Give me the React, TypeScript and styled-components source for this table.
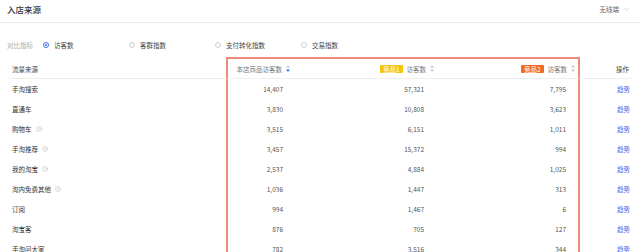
import styled, { createGlobalStyle } from 'styled-components';
import { ChevronDown, CircleHelp } from 'lucide-react';

const GlobalStyle = createGlobalStyle`
  body {
    margin: 0;
    background: #fff;
    font-family: "Noto Sans CJK SC", "Noto Sans", sans-serif;
    color: #333;
  }
`;

interface Row {
  name: string;
  help?: boolean;
  own: string;
  rival1: string;
  rival2: string;
}

const rows: Row[] = [
  { name: '手淘搜索', own: '14,407', rival1: '57,321', rival2: '7,795' },
  { name: '直通车', own: '3,830', rival1: '10,808', rival2: '3,623' },
  { name: '购物车', help: true, own: '3,515', rival1: '6,151', rival2: '1,011' },
  { name: '手淘推荐', help: true, own: '3,457', rival1: '15,372', rival2: '994' },
  { name: '我的淘宝', help: true, own: '2,537', rival1: '4,884', rival2: '1,025' },
  { name: '淘内免费其他', help: true, own: '1,036', rival1: '1,447', rival2: '313' },
  { name: '订阅', own: '994', rival1: '1,467', rival2: '6' },
  { name: '淘宝客', own: '876', rival1: '705', rival2: '127' },
  { name: '手淘问大家', own: '782', rival1: '3,516', rival2: '344' },
];

const options = ['访客数', '客群指数', '支付转化指数', '交易指数'];

const SortIcon = ({ active }: { active?: boolean }) => (
  <svg width="4" height="7" viewBox="0 0 4 7">
    <path d="M2 0 L4 2.6 L0 2.6 Z" fill="#c4c8d0" />
    <path d="M2 7 L4 4.4 L0 4.4 Z" fill={active ? '#3b6ef0' : '#c4c8d0'} />
  </svg>
);

const App = () => {
  return (
    <Page>
      <GlobalStyle />
      <Header>
        <Title>入店来源</Title>
        <Device>
          无线端
          <ChevronDown size={7} color="#999" strokeWidth={1.5} />
        </Device>
      </Header>
      <Filter>
        <FilterLabel>对比指标</FilterLabel>
        {options.map((o, i) => (
          <Option key={o}>
            <Radio $checked={i === 0} />
            {o}
          </Option>
        ))}
      </Filter>
      <Table>
        <HeadCell $dark>流量来源</HeadCell>
        <HeadCell $num $left $top>
          本店商品访客数
          <SortIcon active />
        </HeadCell>
        <HeadCell $num $top>
          <Badge $color="#f4c40f">竞品1</Badge>
          访客数
          <SortIcon />
        </HeadCell>
        <HeadCell $num $right $top>
          <Badge $color="#f06c22">竞品2</Badge>
          访客数
          <SortIcon />
        </HeadCell>
        <HeadCell $num $dark>操作</HeadCell>
        {rows.map((r) => (
          <Line key={r.name}>
            <NameCell>
              {r.name}
              {r.help && <CircleHelp size={6} color="#aaa" strokeWidth={1.6} />}
            </NameCell>
            <NumCell $left $pad={10}>{r.own}</NumCell>
            <NumCell $pad={13}>{r.rival1}</NumCell>
            <NumCell $right $pad={12}>{r.rival2}</NumCell>
            <ActionCell>趋势</ActionCell>
          </Line>
        ))}
      </Table>
    </Page>
  );
};

export default App;

const Page = styled.div`
  width: 640px;
  height: 252px;
  overflow: hidden;
  font-size: 6.5px;
`;

const Header = styled.div`
  box-sizing: border-box;
  height: 23px;
  padding: 0 8px 4px 7px;
  display: flex;
  align-items: center;
  justify-content: space-between;
  border-bottom: 1px solid #ececec;
`;

const Title = styled.h3`
  margin: 0;
  font-size: 8.5px;
  font-weight: 500;
  color: #333;
`;

const Device = styled.div`
  display: flex;
  align-items: center;
  gap: 4px;
  color: #666;
  font-size: 6.5px;
  padding-right: 2px;
`;

const Filter = styled.div`
  height: 12px;
  margin-top: 16px;
  padding-left: 7px;
  display: flex;
  align-items: center;
`;

const FilterLabel = styled.span`
  color: #aaa;
  width: 36px;
`;

const Option = styled.label`
  width: 86px;
  display: flex;
  align-items: center;
  gap: 5px;
  color: #444;
`;

const Radio = styled.span<{ $checked?: boolean }>`
  box-sizing: border-box;
  width: 6px;
  height: 6px;
  border-radius: 50%;
  border: 1px solid ${({ $checked }) => ($checked ? '#3b6ef0' : '#cfcfcf')};
  display: flex;
  align-items: center;
  justify-content: center;
  &::after {
    content: '';
    width: 2px;
    height: 2px;
    border-radius: 50%;
    background: ${({ $checked }) => ($checked ? '#3b6ef0' : 'transparent')};
  }
`;

const Table = styled.div`
  margin: 6px 8px 0 8px;
  display: grid;
  grid-template-columns: 218px 67px 144px 143px 52px;
  grid-auto-rows: 20px;
  grid-template-rows: 22px;
`;

interface CellProps {
  $num?: boolean;
  $left?: boolean;
  $right?: boolean;
  $top?: boolean;
  $dark?: boolean;
  $pad?: number;
}

const HeadCell = styled.div<CellProps>`
  box-sizing: border-box;
  display: flex;
  align-items: center;
  justify-content: ${({ $num }) => ($num ? 'flex-end' : 'flex-start')};
  gap: 4px;
  padding: 0 3px 0 4px;
  color: ${({ $dark }) => ($dark ? '#444' : '#777')};
  border-bottom: 1px solid #eeeeee;
  border-top: 2px solid ${({ $top }) => ($top ? '#ec8a7c' : 'transparent')};
  ${({ $left }) => $left && 'border-left: 2px solid #ec8a7c;'}
  ${({ $right }) => $right && 'border-right: 2px solid #ec8a7c;'}
`;

const Line = styled.div`
  display: contents;
`;

const NameCell = styled.div`
  display: flex;
  align-items: center;
  gap: 4px;
  padding-left: 4px;
  color: #333;
`;

const NumCell = styled.div<CellProps>`
  box-sizing: border-box;
  display: flex;
  align-items: center;
  justify-content: flex-end;
  padding-right: ${({ $pad }) => $pad ?? 12}px;
  color: #555;
  ${({ $left }) => $left && 'border-left: 2px solid #ec8a7c;'}
  ${({ $right }) => $right && 'border-right: 2px solid #ec8a7c;'}
`;

const ActionCell = styled.div`
  display: flex;
  align-items: center;
  justify-content: flex-end;
  padding-right: 2px;
  color: #3b6ef0;
`;

const Badge = styled.span<{ $color: string }>`
  background: ${({ $color }) => $color};
  color: #fff;
  height: 8px;
  line-height: 8px;
  padding: 0 3px;
  border-radius: 1px;
`;
